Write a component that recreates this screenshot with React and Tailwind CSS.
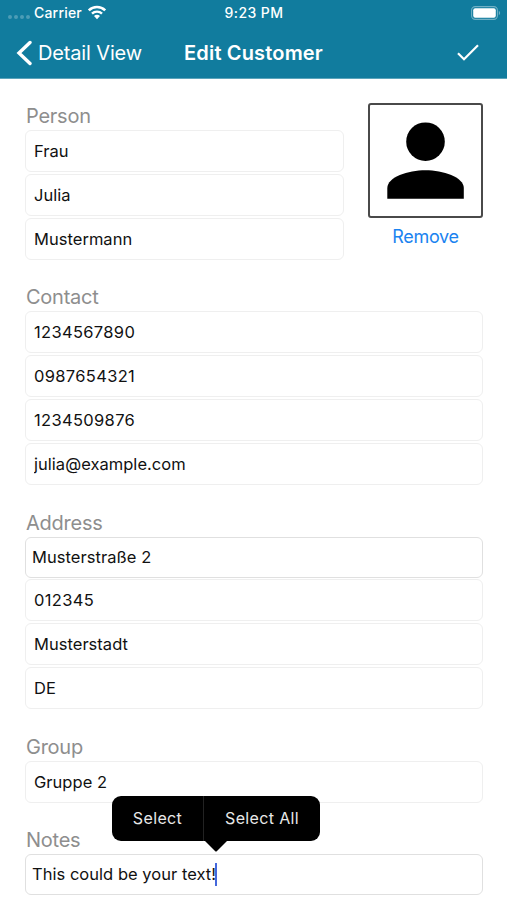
import React, { useState } from "react";

const Field = ({ value, onChange, numeric }) => (
  <input
    type="text"
    value={value}
    onChange={onChange}
    className={
      "block w-full h-[42px] rounded-md border border-[#efefef] bg-white px-2 text-[16.5px] text-[#111111] outline-none " +
      (numeric ? "tracking-[0.33px]" : "tracking-[0.03px]")
    }
  />
);

const SectionLabel = ({ children }) => (
  <h2 className="h-7 pl-px text-[20px] leading-[29px] tracking-[-0.25px] text-[#8e8e8e]">{children}</h2>
);

const StatusBar = () => (
  <div className="grid h-[26px] grid-cols-3 items-center pl-[8px] pr-[6px] pb-px text-[14px] font-medium">
    <div className="flex items-center">
      <div className="mt-[9px] mr-[4px] flex gap-[2px]">
        <span className="size-[4px] rounded-full bg-white/25"></span>
        <span className="size-[4px] rounded-full bg-white/25"></span>
        <span className="size-[4px] rounded-full bg-white/25"></span>
        <span className="size-[4px] rounded-full bg-white/25"></span>
      </div>
      <span className="tracking-[0.2px]">Carrier</span>
      <svg viewBox="0 0 20 15" className="ml-[5px] h-[15px] w-5" fill="none">
        <path d="M1.8 5.4a11.7 11.7 0 0 1 16.4 0" stroke="#fff" strokeWidth="2.6" />
        <path d="M5 8.7a7.1 7.1 0 0 1 10 0" stroke="#fff" strokeWidth="2.4" />
        <path d="M10 14.2 7 11.1a4.2 4.2 0 0 1 6 0Z" fill="#fff" />
      </svg>
    </div>
    <span className="-ml-px text-center tracking-[0.4px]">9:23 PM</span>
    <svg viewBox="0 0 30 14" className="h-[14px] w-[30px] justify-self-end" fill="none">
      <rect x="0.6" y="0.6" width="25.8" height="12.8" rx="3.6" stroke="#fff" strokeOpacity="0.4" strokeWidth="1.1" />
      <rect x="2.2" y="2.2" width="22.6" height="9.6" rx="2" fill="#fff" />
      <path d="M27.8 4.8c1.8.8 1.8 3.6 0 4.4Z" fill="#fff" fillOpacity="0.4" />
    </svg>
  </div>
);

const NavBar = () => (
  <div className="grid h-[53px] grid-cols-[1fr_auto_1fr] items-center border-b border-[#5ba4bb] px-[16px]">
    <button className="flex items-center gap-[6px] pt-px text-[20px] tracking-[-0.15px]">
      <svg viewBox="0 0 16 28" className="h-7 w-4" fill="none">
        <path d="M14 3.5 3 14l11 10.5" stroke="#fff" strokeWidth="3.4" strokeLinecap="round" strokeLinejoin="miter" />
      </svg>
      Detail View
    </button>
    <h1 className="pt-px text-[20px] font-semibold tracking-[0.16px]">Edit Customer</h1>
    <button className="mr-[12px] justify-self-end">
      <svg viewBox="0 0 22 17" className="block h-[17px] w-[22px]" fill="none">
        <path d="m1 9.2 6 6L21 1.2" stroke="#fff" strokeWidth="2.2" />
      </svg>
    </button>
  </div>
);

const EditMenu = () => (
  <div className="absolute top-[-59px] left-[86px] flex h-[45px] w-[208px] rounded-[9px] bg-black text-[16px] tracking-[0.35px] text-[#e8e8e8]">
    <button className="w-[92px] border-r border-[#222222] pb-px">Select</button>
    <button className="flex-1 pb-px">Select All</button>
    <svg viewBox="0 0 24 12" className="absolute top-[44px] left-[92px] h-3 w-6">
      <path d="M0 0h24L13 11q-1 1-2 0Z" fill="#000" />
    </svg>
  </div>
);

const App = () => {
  const [customer, setCustomer] = useState({
    title: "Frau",
    firstName: "Julia",
    lastName: "Mustermann",
    phone: "1234567890",
    mobile: "0987654321",
    fax: "1234509876",
    email: "julia@example.com",
    zip: "012345",
    city: "Musterstadt",
    country: "DE",
    group: "Gruppe 2",
  });

  const renderField = (name) => (
    <Field
      key={name}
      value={customer[name]}
      numeric={/^\d+$/.test(customer[name])}
      onChange={(e) => setCustomer({ ...customer, [name]: e.target.value })}
    />
  );

  return (
    <div className="h-[900px] w-full overflow-hidden bg-white font-[Inter,sans-serif]">
      <header className="h-[79px] bg-[#117c9e] text-white">
        <StatusBar />
        <NavBar />
      </header>

      <main className="pt-[23px] pr-[24px] pl-[25px]">
        <div className="flex gap-6">
          <section className="flex-1">
            <SectionLabel>Person</SectionLabel>
            <div className="flex flex-col gap-[2px]">
              {["title", "firstName", "lastName"].map(renderField)}
            </div>
          </section>
          <div className="w-[115px] pt-[1px]">
            <div className="h-[115px] rounded-[3px] border-2 border-[#4a4a4a]">
              <svg viewBox="0 0 111 111" className="h-full w-full">
                <circle cx="55.5" cy="36.7" r="19.3" />
                <path d="M17.3 93.8V83C17.3 72 38 65.2 55.5 65.2s38.3 6.8 38.3 17.8v10.8Z" />
              </svg>
            </div>
            <button className="mt-[5px] block w-full text-center text-[18px] tracking-[-0.3px] text-[#1a83f0]">
              Remove
            </button>
          </div>
        </div>

        <section className="mt-[23px]">
          <SectionLabel>Contact</SectionLabel>
          <div className="flex flex-col gap-[2px]">
            {["phone", "mobile", "fax", "email"].map(renderField)}
          </div>
        </section>

        <section className="mt-[24px]">
          <SectionLabel>Address</SectionLabel>
          <div className="h-[41px] rounded-md border border-[#e0e0e0] px-[6px] text-[16.5px] leading-[39px] tracking-[0.06px] text-[#111111]">
            Musterstraße 2
          </div>
          <div className="mt-px flex flex-col gap-[2px]">
            {["zip", "city", "country"].map(renderField)}
          </div>
        </section>

        <section className="mt-[24px]">
          <SectionLabel>Group</SectionLabel>
          {renderField("group")}
        </section>

        <section className="mt-[23px]">
          <SectionLabel>Notes</SectionLabel>
          <div className="relative flex h-[41px] items-center rounded-md border border-[#e0e0e0] px-[6px] text-[16.5px] tracking-[0.03px] text-[#111111]">
            <span>This could be your text!</span>
            <span className="-ml-px h-[23px] w-[2px] bg-[#4568dc]"></span>
            <EditMenu />
          </div>
        </section>
      </main>
    </div>
  );
};

export default App;
